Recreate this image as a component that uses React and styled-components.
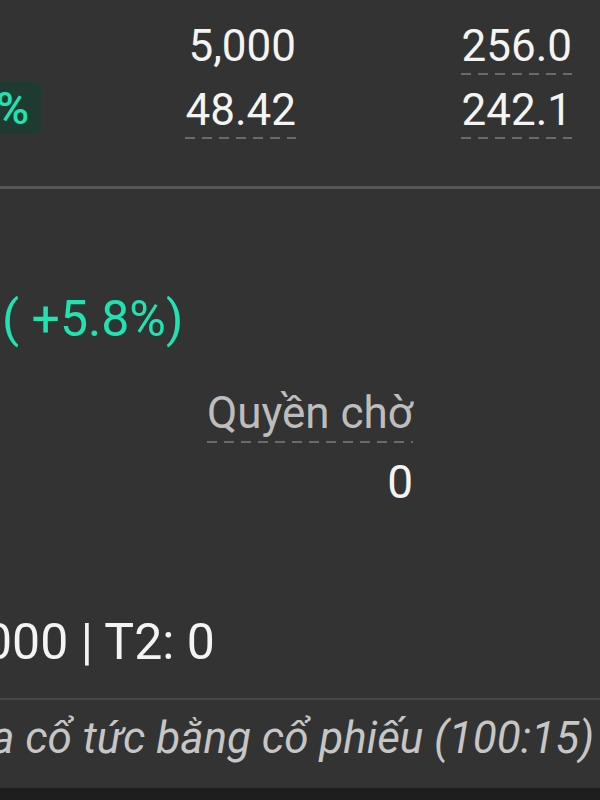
import React from "react";
import styled, { createGlobalStyle } from "styled-components";

const Global = createGlobalStyle`
  html, body { margin: 0; padding: 0; background: #333333; }
  body { font-family: Roboto, "Noto Sans", "Liberation Sans", sans-serif; }
  * { box-sizing: border-box; }
`;

const Screen = styled.div`
  width: 600px;
  height: 800px;
  overflow: hidden;
  background: #333333;
  display: flex;
  flex-direction: column;
  color: #f4f4f4;
`;

const TopSection = styled.section`
  height: 186px;
  padding-top: 22px;
  display: grid;
  grid-template-columns: 40px 256px 276px;
  grid-auto-rows: 53px;
  row-gap: 11px;
  align-items: start;
`;

const Cell = styled.div`
  display: flex;
  justify-content: ${(p) => (p.$align === "left" ? "flex-start" : "flex-end")};
`;

const Value = styled.span`
  display: inline-block;
  font-size: ${(p) => p.$size || 44}px;
  line-height: ${(p) => p.$lh || 48}px;
  color: ${(p) => p.$color || "#f4f4f4"};
  white-space: nowrap;
  padding-bottom: ${(p) => (p.$dashed ? 5 : 0)}px;
  background: ${(p) =>
    p.$dashed
      ? "repeating-linear-gradient(to right, #6a6a6a 0 10px, transparent 10px 17px) left bottom / 100% 2px no-repeat"
      : "none"};
`;

const Badge = styled.div`
  height: 52px;
  margin-top: -4px;
  display: inline-flex;
  align-items: center;
  padding-right: 12px;
  margin-left: -4px;
  background: #1f3a31;
  border-radius: 0 6px 6px 0;
  color: #1fe3b0;
  font-size: 45px;
  font-weight: 500;
  line-height: 1;
`;

const Divider = styled.div`
  height: ${(p) => p.$h}px;
  margin-top: ${(p) => p.$mt || 0}px;
  background: ${(p) => p.$c};
  flex: none;
`;

const MidSection = styled.section`
  padding-top: 102px;
  display: flex;
  flex-direction: column;
`;

const Change = styled.div`
  font-size: 50px;
  line-height: 56px;
  color: #1fe3b0;
  padding-left: 2px;
  white-space: nowrap;
`;

const RightStack = styled.div`
  width: 413px;
  margin-top: 41px;
  display: flex;
  flex-direction: column;
  align-items: flex-end;
  gap: 13px;
`;

const T2Line = styled.div`
  margin-top: 104px;
  margin-left: -16px;
  font-size: 50px;
  line-height: 60px;
  color: #f4f4f4;
  white-space: nowrap;
`;

const Note = styled.div`
  margin-top: 12px;
  display: flex;
  justify-content: flex-end;
  padding-right: 6px;
  font-size: 44px;
  line-height: 52px;
  font-style: italic;
  color: #c6c6c6;
  white-space: nowrap;
`;

const BottomBar = styled.div`
  margin-top: auto;
  height: 12px;
  background: #1e1e1e;
  flex: none;
`;

export default function App() {
  return (
    <>
      <Global />
      <Screen>
        <TopSection>
          <Cell />
          <Cell>
            <Value>5,000</Value>
          </Cell>
          <Cell>
            <Value $dashed>256.0</Value>
          </Cell>
          <Cell $align="left">
            <Badge>%</Badge>
          </Cell>
          <Cell>
            <Value $dashed>48.42</Value>
          </Cell>
          <Cell>
            <Value $dashed>242.1</Value>
          </Cell>
        </TopSection>
        <Divider $h={3} $c="#575757" />
        <MidSection>
          <Change>( +5.8%)</Change>
          <RightStack>
            <Value $size={44} $lh={50} $color="#bdbdbd" $dashed>
              Quyền chờ
            </Value>
            <Value $size={46} $lh={52}>0</Value>
          </RightStack>
          <T2Line>000 | T2: 0</T2Line>
        </MidSection>
        <Divider $h={2} $c="#474747" $mt={26} />
        <Note>a cổ tức bằng cổ phiếu (100:15)</Note>
        <BottomBar />
      </Screen>
    </>
  );
}
